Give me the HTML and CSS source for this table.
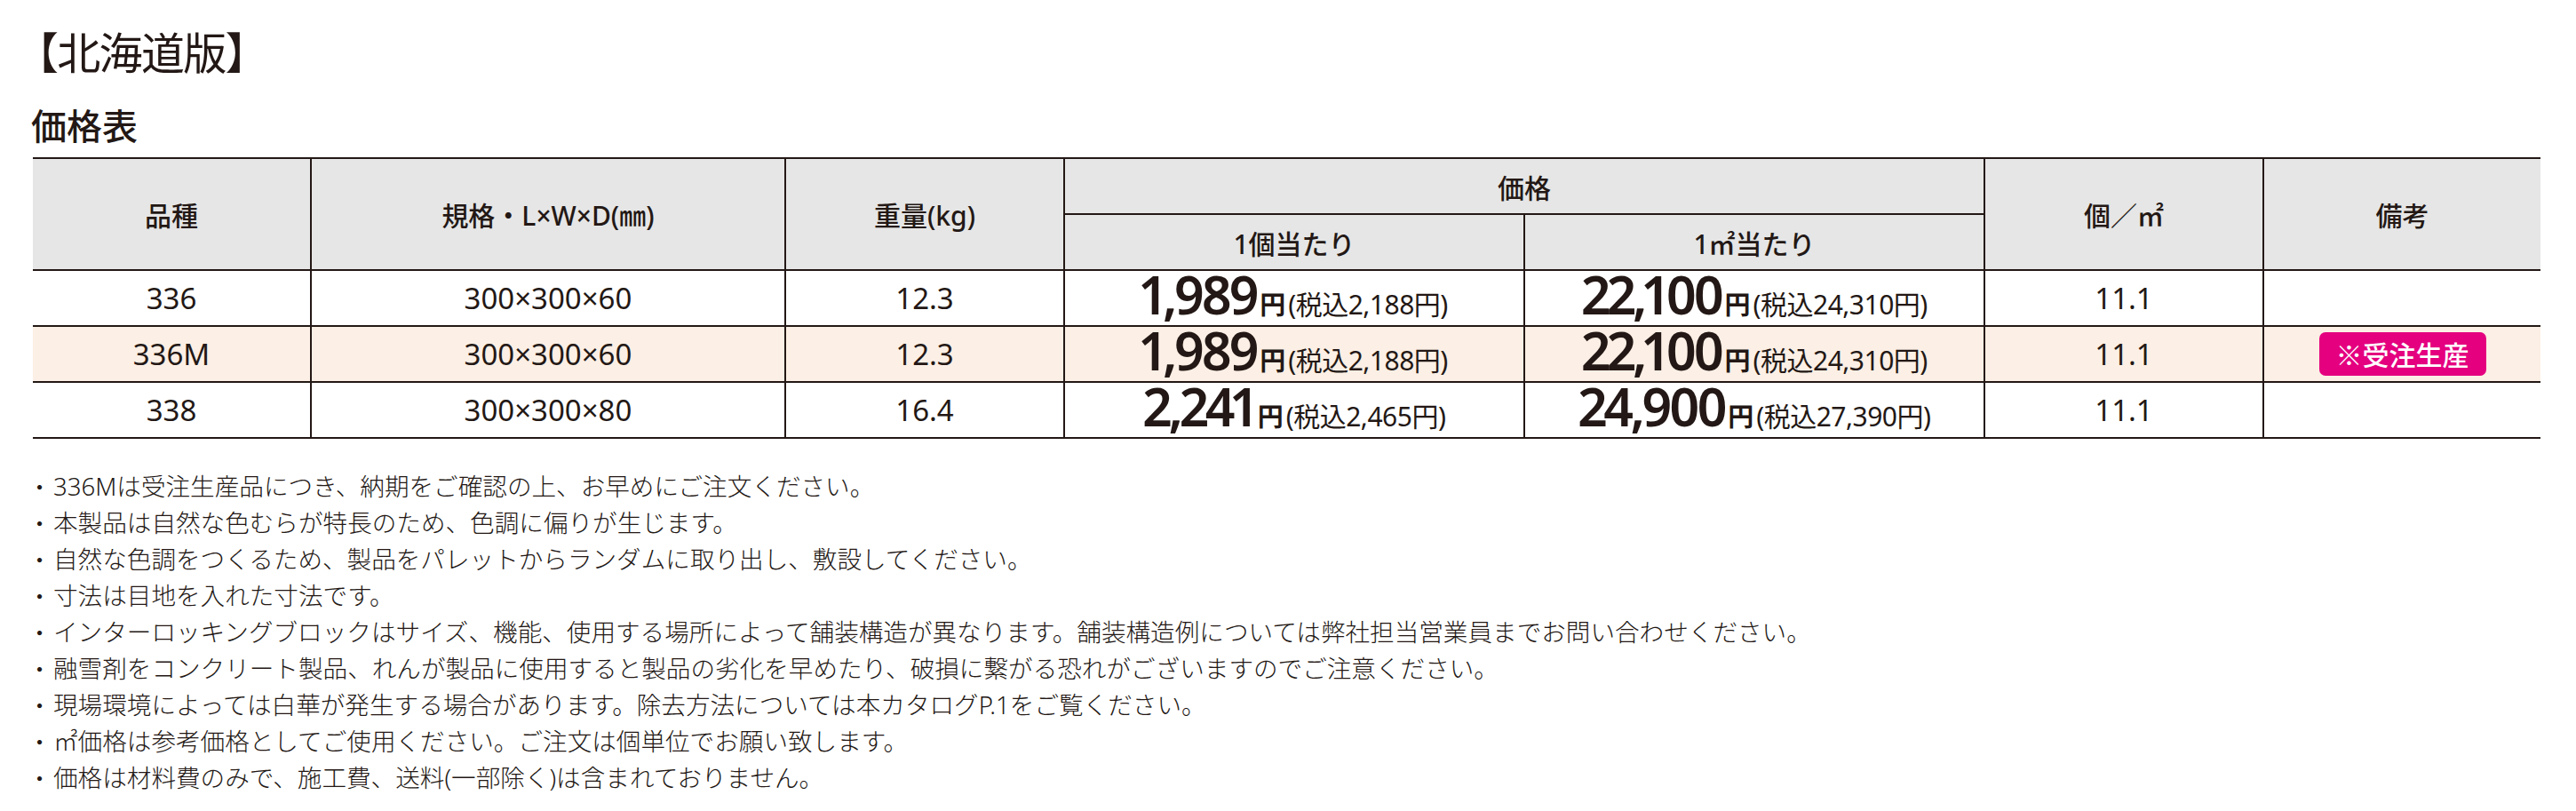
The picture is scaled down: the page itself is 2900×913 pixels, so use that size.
FILE: index.html
```html
<!DOCTYPE html>
<html lang="ja">
<head>
<meta charset="utf-8">
<title>北海道版 価格表</title>
<link rel="stylesheet" href="styles.css">
</head>
<body>
<div class="page">
  <h1 class="title">【北海道版】</h1>
  <div class="content">
    <h2 class="heading">価格表</h2>
    <div class="table">
      <div class="cell head span2r">品種</div>
      <div class="cell head span2r">規格・L×W×D(㎜)</div>
      <div class="cell head span2r">重量(kg)</div>
      <div class="cell head span2c">価格</div>
      <div class="cell head span2r">個／㎡</div>
      <div class="cell head span2r">備考</div>
      <div class="cell head">1個当たり</div>
      <div class="cell head">1㎡当たり</div>

      <div class="cell num">336</div>
      <div class="cell num">300×300×60</div>
      <div class="cell num">12.3</div>
      <div class="cell price"><span class="big">1,989</span><span class="yen">円</span><span class="tax">(税込2,188円)</span></div>
      <div class="cell price"><span class="big">22,100</span><span class="yen">円</span><span class="tax">(税込24,310円)</span></div>
      <div class="cell num">11.1</div>
      <div class="cell"></div>

      <div class="cell num alt">336M</div>
      <div class="cell num alt">300×300×60</div>
      <div class="cell num alt">12.3</div>
      <div class="cell price alt"><span class="big">1,989</span><span class="yen">円</span><span class="tax">(税込2,188円)</span></div>
      <div class="cell price alt"><span class="big">22,100</span><span class="yen">円</span><span class="tax">(税込24,310円)</span></div>
      <div class="cell num alt">11.1</div>
      <div class="cell alt"><span class="badge">※受注生産</span></div>

      <div class="cell num">338</div>
      <div class="cell num">300×300×80</div>
      <div class="cell num">16.4</div>
      <div class="cell price"><span class="big">2,241</span><span class="yen">円</span><span class="tax">(税込2,465円)</span></div>
      <div class="cell price"><span class="big">24,900</span><span class="yen">円</span><span class="tax">(税込27,390円)</span></div>
      <div class="cell num">11.1</div>
      <div class="cell"></div>
    </div>
    <ul class="notes">
      <li><span class="dot">・</span><span class="text">336Mは受注生産品につき、納期をご確認の上、お早めにご注文ください。</span></li>
      <li><span class="dot">・</span><span class="text">本製品は自然な色むらが特長のため、色調に偏りが生じます。</span></li>
      <li><span class="dot">・</span><span class="text">自然な色調をつくるため、製品をパレットからランダムに取り出し、敷設してください。</span></li>
      <li><span class="dot">・</span><span class="text">寸法は目地を入れた寸法です。</span></li>
      <li><span class="dot">・</span><span class="text">インターロッキングブロックはサイズ、機能、使用する場所によって舗装構造が異なります。舗装構造例については弊社担当営業員までお問い合わせください。</span></li>
      <li><span class="dot">・</span><span class="text">融雪剤をコンクリート製品、れんが製品に使用すると製品の劣化を早めたり、破損に繋がる恐れがございますのでご注意ください。</span></li>
      <li><span class="dot">・</span><span class="text">現場環境によっては白華が発生する場合があります。除去方法については本カタログP.1をご覧ください。</span></li>
      <li><span class="dot">・</span><span class="text">㎡価格は参考価格としてご使用ください。ご注文は個単位でお願い致します。</span></li>
      <li><span class="dot">・</span><span class="text">価格は材料費のみで、施工費、送料(一部除く)は含まれておりません。</span></li>
    </ul>
  </div>
</div>
</body>
</html>
```

FILE: styles.css
```css
body {
  margin: 8px;
  background: #ffffff;
  color: #231815;
  font-family: "Noto Sans CJK JP", sans-serif;
}

.title {
  margin: 0;
  padding: 14px 0 0 9px;
  font-size: 49px;
  line-height: 70px;
  font-weight: 400;
  letter-spacing: -1.7px;
}

.content {
  padding-left: 29px;
}

.heading {
  margin: 23px 0 12px -2px;
  font-size: 40px;
  line-height: 50px;
  font-weight: 500;
}

.table {
  display: grid;
  grid-template-columns: 312px 532px 312px 516px 516px 312px 311px;
  grid-template-rows: repeat(5, 61px);
  gap: 2px;
  padding: 2px 0;
  width: 2823px;
  background: #231815;
}

.cell {
  display: flex;
  align-items: center;
  justify-content: center;
  background: #ffffff;
  font-family: "Noto Sans", "Noto Sans CJK JP", sans-serif;
  font-size: 30px;
  white-space: nowrap;
}

.head {
  background: #e6e6e6;
  font-weight: 500;
}

.span2r {
  grid-row: span 2;
}

.span2c {
  grid-column: span 2;
}

.alt {
  background: #fcefe5;
}

.num {
  font-size: 33px;
}

.price {
  align-items: baseline;
}

.price .big {
  font-size: 59px;
  font-weight: 600;
  line-height: 52px;
  letter-spacing: -4px;
  font-variant-numeric: proportional-nums;
  margin-right: 4px;
}

.price .yen {
  font-family: "Noto Sans CJK JP", sans-serif;
  font-size: 29px;
  font-weight: 700;
}

.price .tax {
  font-size: 30px;
  margin-left: 3px;
  letter-spacing: -0.5px;
}

.badge {
  display: inline-block;
  height: 49px;
  line-height: 49px;
  padding: 0 19px;
  border-radius: 7px;
  background: #e4007f;
  color: #ffffff;
  font-family: "Noto Sans CJK JP", sans-serif;
  font-size: 30px;
  font-weight: 500;
}

.notes {
  margin: 33px 0 0;
  padding: 0;
  list-style: none;
  font-family: "Noto Sans", "Noto Sans CJK JP", sans-serif;
  font-size: 27.6px;
  line-height: 41px;
  font-weight: 300;
}

.notes li {
  display: flex;
  white-space: nowrap;
}

.notes .dot {
  display: flex;
  justify-content: center;
  width: 15px;
  margin-right: 8px;
  font-family: "Noto Sans CJK JP", sans-serif;
}
```
